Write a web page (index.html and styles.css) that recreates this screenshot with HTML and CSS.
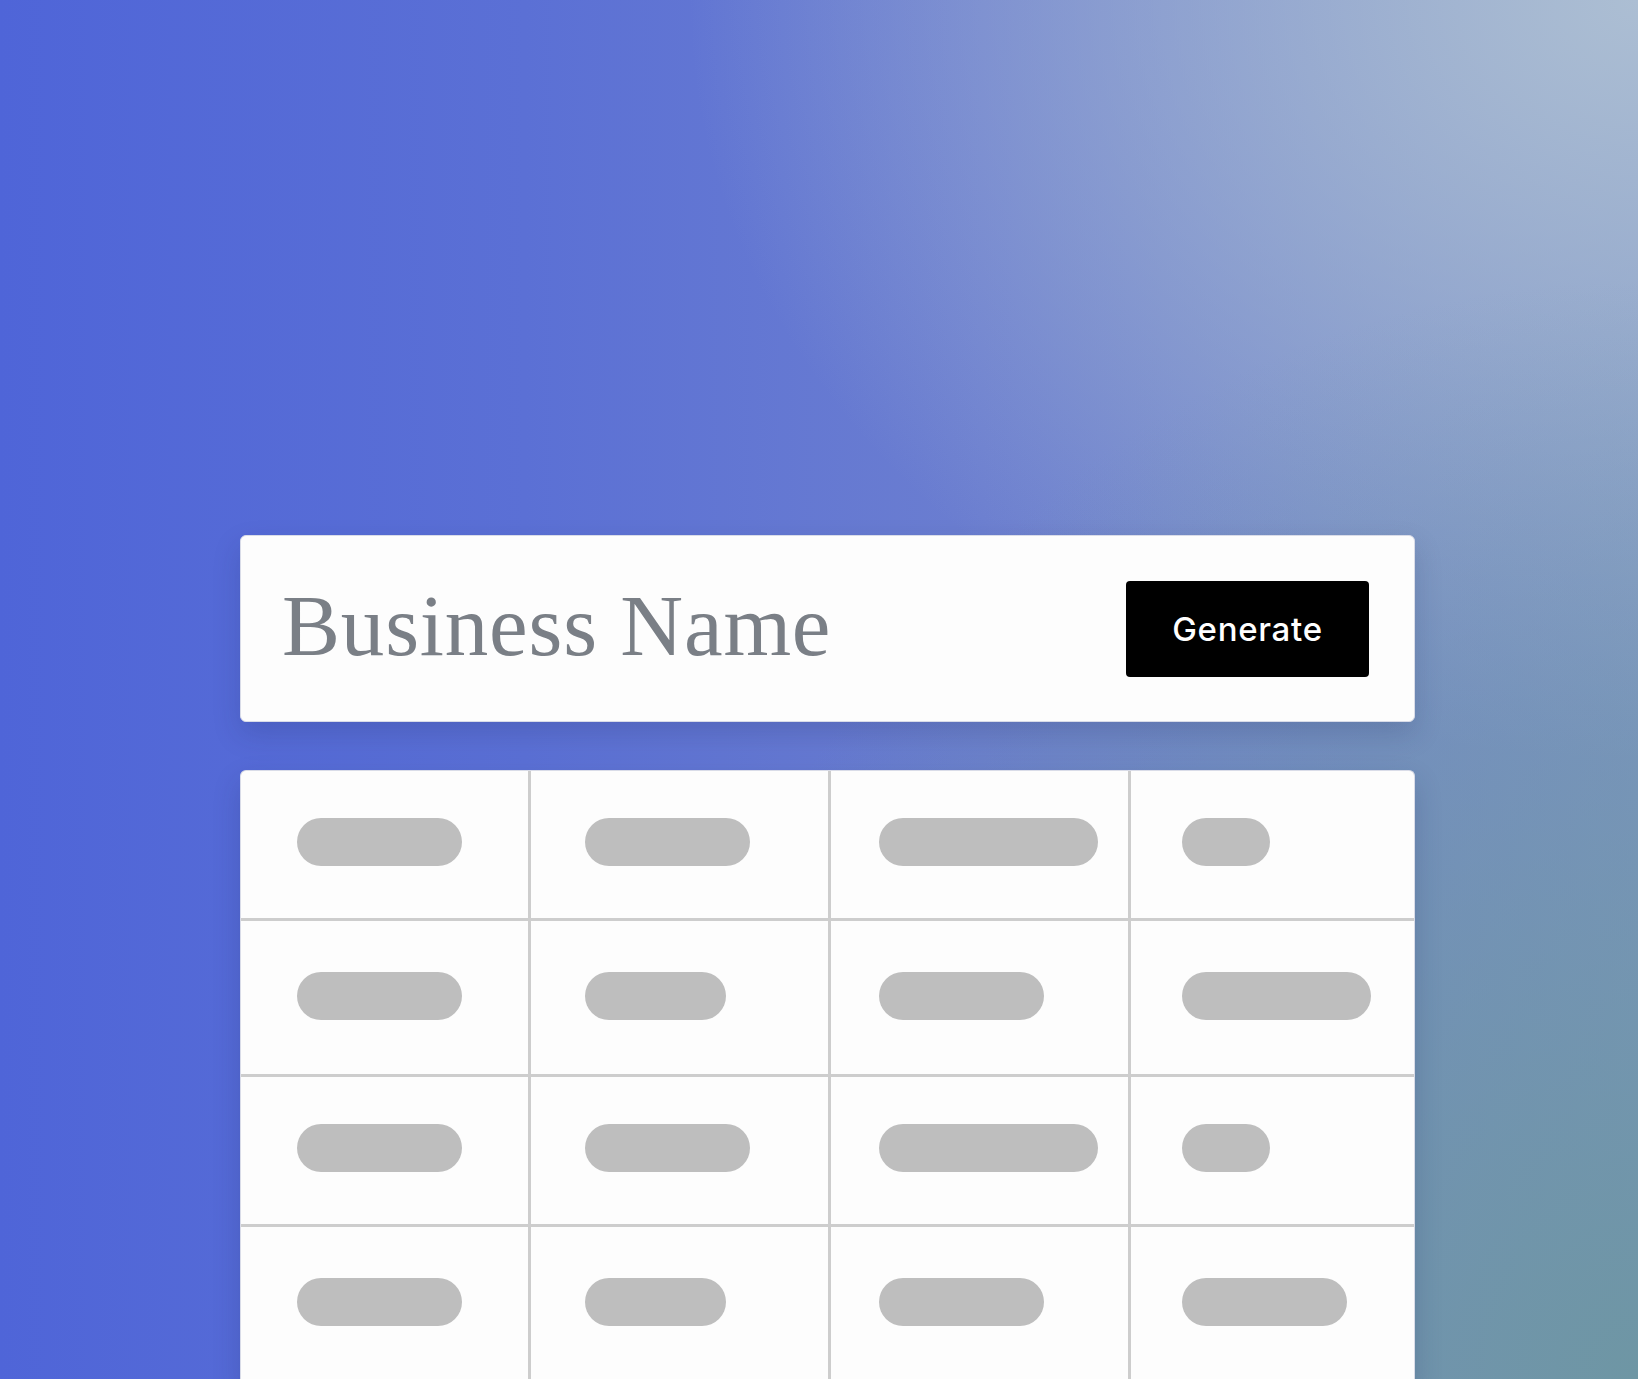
FILE: index.html
```html
<!DOCTYPE html>
<html lang="en">
<head>
<meta charset="utf-8">
<title>Business Name Generator</title>
<link rel="stylesheet" href="styles.css">
</head>
<body>
<main class="stage">
  <section class="name-card">
    <span class="name-text">Business Name</span>
    <button class="generate-btn" type="button">Generate</button>
  </section>
  <section class="results">
    <div class="cell c1 r-odd"><span class="pill w165"></span></div>
    <div class="cell c2 r-odd"><span class="pill w165"></span></div>
    <div class="cell c3 r-odd"><span class="pill w219"></span></div>
    <div class="cell c4 r-odd"><span class="pill w88"></span></div>

    <div class="cell c1 r-even"><span class="pill w165"></span></div>
    <div class="cell c2 r-even"><span class="pill w141"></span></div>
    <div class="cell c3 r-even"><span class="pill w165"></span></div>
    <div class="cell c4 r-even"><span class="pill w189"></span></div>

    <div class="cell c1 r-odd"><span class="pill w165"></span></div>
    <div class="cell c2 r-odd"><span class="pill w165"></span></div>
    <div class="cell c3 r-odd"><span class="pill w219"></span></div>
    <div class="cell c4 r-odd"><span class="pill w88"></span></div>

    <div class="cell c1 r-even"><span class="pill w165"></span></div>
    <div class="cell c2 r-even"><span class="pill w141"></span></div>
    <div class="cell c3 r-even"><span class="pill w165"></span></div>
    <div class="cell c4 r-even"><span class="pill w165"></span></div>
  </section>
</main>
</body>
</html>
```

FILE: styles.css
```css
html, body {
  margin: 0;
  padding: 0;
}

body {
  width: 1638px;
  height: 1379px;
  overflow: hidden;
  background:
    radial-gradient(ellipse 1000px 1100px at 100% 100%, rgba(110, 150, 164, 1) 0%, rgba(110, 150, 164, 0) 100%),
    radial-gradient(ellipse 950px 760px at 100% 0%, rgba(172, 190, 211, 1) 0%, rgba(172, 190, 211, 0) 100%),
    linear-gradient(to right, #4f65d8 0%, #5b70d5 32%, #6b7ed0 60%, #7d94c6 100%);
  font-family: "Inter", "Liberation Sans", sans-serif;
}

.stage {
  display: flex;
  flex-direction: column;
  gap: 48px;
  padding: 535px 0 0 240px;
  width: 1175px;
}

.name-card {
  box-sizing: border-box;
  height: 187px;
  display: flex;
  align-items: center;
  justify-content: space-between;
  padding: 0 45px 0 41px;
  background: #fdfdfd;
  border: 1px solid #d9dce8;
  border-radius: 6px;
  box-shadow: 0 12px 28px rgba(30, 40, 90, 0.18);
}

.name-text {
  font-family: "Liberation Serif", "Times New Roman", serif;
  font-size: 87px;
  line-height: 1;
  color: #7a7f86;
  padding-bottom: 6px;
  letter-spacing: 0.8px;
}

.generate-btn {
  width: 243px;
  height: 96px;
  background: #000;
  color: #fff;
  border: none;
  border-radius: 4px;
  font-family: "Inter", "Liberation Sans", sans-serif;
  font-size: 33px;
  font-weight: 500;
  letter-spacing: 0.7px;
  padding: 0;
}

.results {
  box-sizing: border-box;
  display: grid;
  grid-template-columns: 287px 297px 297px 283px;
  grid-template-rows: 147px 153px 147px 160px;
  gap: 3px;
  background: #cdcdcd;
  border: 1px solid #d9dce8;
  border-bottom: none;
  border-radius: 6px 6px 0 0;
  overflow: hidden;
  box-shadow: 0 12px 28px rgba(30, 40, 90, 0.2);
}

.cell {
  background: #fdfdfd;
  display: flex;
  align-items: flex-start;
}

.r-odd { padding-top: 47px; }
.r-even { padding-top: 51px; }

.c1 { padding-left: 56px; }
.c2 { padding-left: 54px; }
.c3 { padding-left: 48px; }
.c4 { padding-left: 51px; }

.pill {
  display: block;
  height: 48px;
  border-radius: 24px;
  background: #bebebe;
}

.w88 { width: 88px; }
.w141 { width: 141px; }
.w165 { width: 165px; }
.w189 { width: 189px; }
.w219 { width: 219px; }
```
